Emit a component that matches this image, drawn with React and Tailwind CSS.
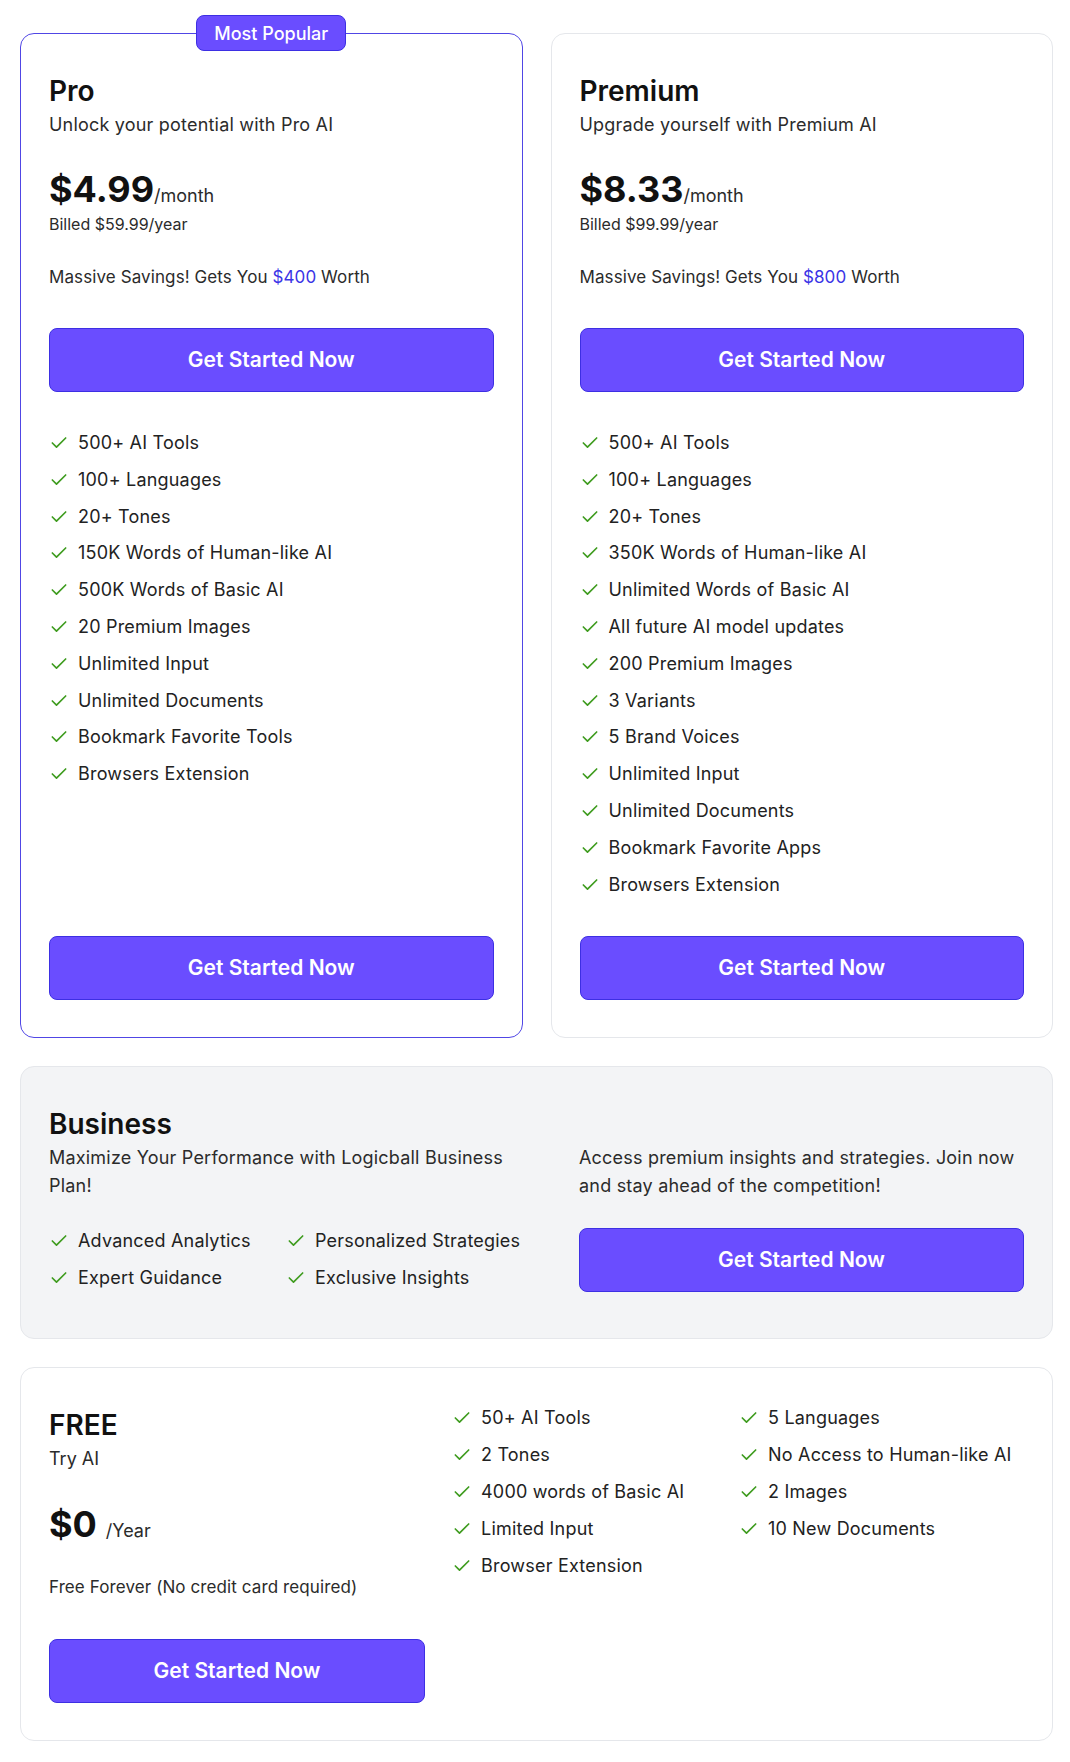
import { Check } from "lucide-react";

const proFeatures = [
    "500+ AI Tools",
    "100+ Languages",
    "20+ Tones",
    "150K Words of Human-like AI",
    "500K Words of Basic AI",
    "20 Premium Images",
    "Unlimited Input",
    "Unlimited Documents",
    "Bookmark Favorite Tools",
    "Browsers Extension",
];

const premiumFeatures = [
    "500+ AI Tools",
    "100+ Languages",
    "20+ Tones",
    "350K Words of Human-like AI",
    "Unlimited Words of Basic AI",
    "All future AI model updates",
    "200 Premium Images",
    "3 Variants",
    "5 Brand Voices",
    "Unlimited Input",
    "Unlimited Documents",
    "Bookmark Favorite Apps",
    "Browsers Extension",
];

const freeLeft = ["50+ AI Tools", "2 Tones", "4000 words of Basic AI", "Limited Input", "Browser Extension"];
const freeRight = ["5 Languages", "No Access to Human-like AI", "2 Images", "10 New Documents"];

const Feature = ({ children }) => (
    <li className="flex items-center gap-[9px] text-[18px] leading-[28px] tracking-[0.2px] text-[#222]">
        <Check size={20} strokeWidth={2} className="shrink-0 text-[#3f9c1f]" />
        <span className="whitespace-nowrap">{children}</span>
    </li>
);

const CTA = ({ className = "" }) => (
    <button className={`h-16 rounded-lg border border-[#3d2fe3] bg-[#6a4dff] text-[21px] font-semibold text-white ${className}`}>
        Get Started Now
    </button>
);

const PlanCard = ({ name, tagline, price, billed, worth, features, popular }) => (
    <div
        className={`relative flex flex-col rounded-[14px] border bg-white px-[28px] pt-[39px] pb-[37px] ${popular ? "border-[#5046e5]" : "border-[#e5e7eb]"}`}
    >
        {popular && (
            <div className="absolute -top-[19px] left-1/2 flex h-9 w-[150px] -translate-x-1/2 items-center justify-center rounded-lg border border-[#3d2fe3] bg-[#6a4dff] text-[18px] font-medium text-white">
                Most Popular
            </div>
        )}
        <h3 className="text-[28px] leading-[36px] font-semibold text-[#111]">{name}</h3>
        <p className="mt-[2px] text-[18px] leading-[28px] tracking-[0.2px] text-[#2b2b2b]">{tagline}</p>
        <div className="mt-[30px] flex items-baseline">
            <span className="text-4xl leading-[40px] font-bold text-[#111]">{price}</span>
            <span className="text-[18px] text-[#2b2b2b]">/month</span>
        </div>
        <p className="mt-[5px] text-[16px] leading-[20px] text-[#2b2b2b]">{billed}</p>
        <p className="mt-[31px] text-[17px] leading-[24px] tracking-[0.1px] text-[#2b2b2b]">
            Massive Savings! Gets You <span className="text-[#3b34e6]">{worth}</span> Worth
        </p>
        <CTA className="mt-[39px] w-full" />
        <ul className="mt-[37px] mb-[37px] flex flex-col gap-[8.8px]">
            {features.map((f) => (
                <Feature key={f}>{f}</Feature>
            ))}
        </ul>
        <CTA className="mt-auto w-full" />
    </div>
);

export default function App() {
    return (
        <div className="min-h-screen bg-white pl-5 pr-[17px] pt-[33px] pb-[22px] font-['Inter','Noto_Sans',sans-serif]">
            <div className="grid grid-cols-2 gap-7">
                <PlanCard
                    popular
                    name="Pro"
                    tagline="Unlock your potential with Pro AI"
                    price="$4.99"
                    billed="Billed $59.99/year"
                    worth="$400"
                    features={proFeatures}
                />
                <PlanCard
                    name="Premium"
                    tagline="Upgrade yourself with Premium AI"
                    price="$8.33"
                    billed="Billed $99.99/year"
                    worth="$800"
                    features={premiumFeatures}
                />
            </div>

            {/* business */}
            <div className="mt-[28px] grid grid-cols-[1fr_445px] gap-x-[50px] rounded-[14px] border border-[#e5e7eb] bg-[#f3f4f6] px-[28px] pt-[39px] pb-[46px]">
                <div>
                    <h3 className="text-[28px] leading-[36px] font-semibold text-[#111]">Business</h3>
                    <p className="mt-[2px] text-[18px] leading-[28px] tracking-[0.2px] text-[#2b2b2b]">
                        Maximize Your Performance with Logicball Business Plan!
                    </p>
                    <ul className="mt-[27px] grid grid-cols-[237px_auto] gap-y-[9px]">
                        <Feature>Advanced Analytics</Feature>
                        <Feature>Personalized Strategies</Feature>
                        <Feature>Expert Guidance</Feature>
                        <Feature>Exclusive Insights</Feature>
                    </ul>
                </div>
                <div className="mt-[38px]">
                    <p className="text-[18px] leading-[28px] tracking-[0.2px] text-[#2b2b2b]">
                        Access premium insights and strategies. Join now and stay ahead of the competition!
                    </p>
                    <CTA className="mt-[28px] w-full" />
                </div>
            </div>

            {/* free */}
            <div className="mt-[28px] grid grid-cols-[403px_287px_1fr] rounded-[14px] border border-[#e5e7eb] bg-white px-[28px] pt-[36px] pb-[37px]">
                <div className="pt-[3px]">
                    <h3 className="text-[28px] leading-[36px] font-semibold text-[#111]">FREE</h3>
                    <p className="mt-[2px] text-[18px] leading-[28px] text-[#2b2b2b]">Try AI</p>
                    <div className="mt-[31px] flex items-baseline gap-[9px]">
                        <span className="text-4xl leading-[40px] font-bold text-[#111]">$0</span>
                        <span className="text-[18px] text-[#2b2b2b]">/Year</span>
                    </div>
                    <p className="mt-[31px] text-[17px] leading-[24px] tracking-[0.1px] text-[#2b2b2b]">Free Forever (No credit card required)</p>
                    <CTA className="mt-[40px] w-[376px]" />
                </div>
                <ul className="flex flex-col gap-[9px]">
                    {freeLeft.map((f) => (
                        <Feature key={f}>{f}</Feature>
                    ))}
                </ul>
                <ul className="flex flex-col gap-[9px]">
                    {freeRight.map((f) => (
                        <Feature key={f}>{f}</Feature>
                    ))}
                </ul>
            </div>
        </div>
    );
}
